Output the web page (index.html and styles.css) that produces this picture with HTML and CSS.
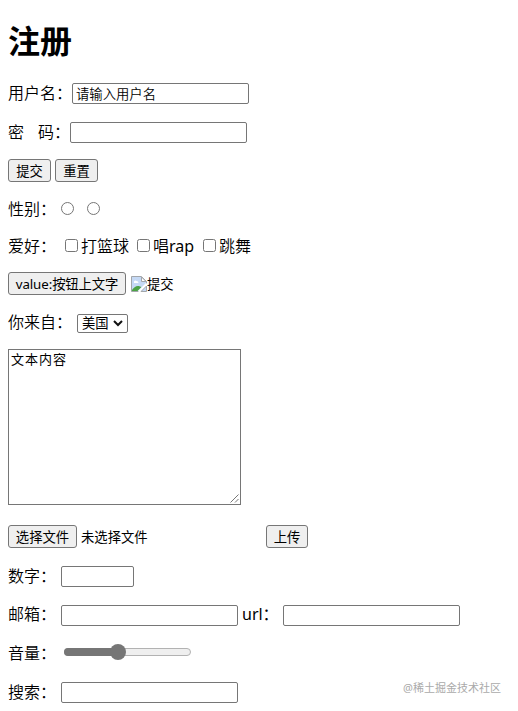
FILE: index.html
```html
<!DOCTYPE html>
<html lang="zh-CN">
<head>
<meta charset="UTF-8">
<title>注册</title>
<link rel="stylesheet" href="styles.css">
</head>
<body>
<h1>注册</h1>
<form>
  <div class="row user"><label class="w64">用户名：</label><input class="field" type="text" value="请输入用户名"></div>
  <div class="row pass"><label class="w62"><span class="mi">密</span>码：</label><input class="field" type="password"></div>
  <div class="row actions"><button class="btn w43" type="button">提交</button><button class="btn w43" type="button">重置</button></div>
  <div class="row gender"><label class="w53">性别：</label><input class="radio" type="radio"><input class="radio" type="radio"></div>
  <div class="row hobby"><label class="w57">爱好：</label><input class="check" type="checkbox"><span class="opt ball">打篮球</span><input class="check" type="checkbox"><span class="opt rap">唱<span class="latin">rap</span></span><input class="check" type="checkbox"><span class="opt">跳舞</span></div>
  <div class="row image"><button class="btn w118" type="button">value:按钮上文字</button>
    <svg class="broken" width="16" height="16" viewBox="0 0 16 16">
      <path d="M.5.5h10l5 5v2l-8 8h-7z" fill="#c5d9f5" stroke="#a2a6aa"/>
      <path d="M10.500 1v4.500h4.500z" fill="#fff" stroke="#a2a6aa"/>
      <path d="M3 6.500a1.500 1.500 0 0 1 2.500-1.500a2 2 0 0 1 2 2H3z" fill="#fff"/>
      <path d="M1 15v-1c2-3 5-5 8-3.500l1.500.5-4 4z" fill="#4ca345"/>
      <path d="M10 15.500h5.500v-5.500z" fill="#c5d9f5" stroke="#a2a6aa"/>
      <path d="M7.500 15.500l8-8" stroke="#fff" stroke-width="1.500"/>
    </svg><span class="alt">提交</span></div>
  <div class="row from"><label class="w69">你来自：</label><span class="select">美国<svg width="10" height="7" viewBox="0 0 10 7"><path d="M1 1l4 4 4-4" fill="none" stroke="#111" stroke-width="2"/></svg></span></div>
  <div class="row content"><div class="area">文本内容<svg class="grip" width="9" height="9" viewBox="0 0 9 9"><path d="M.5 8.500l8-8M5 8.500l3.500-3.500" fill="none" stroke="#777"/></svg></div></div>
  <div class="row file"><button class="btn w69" type="button">选择文件</button><span class="filename">未选择文件</span><button class="btn w42" type="button">上传</button></div>
  <div class="row number"><label class="w53">数字：</label><input class="field short" type="text"></div>
  <div class="row email"><label class="w53">邮箱：</label><input class="field" type="email"><label class="url latin">url：</label><input class="field" type="url"></div>
  <div class="row volume"><label class="w56">音量：</label><div class="track"><span class="fill"></span><span class="thumb"></span></div></div>
  <div class="row search"><label class="w53">搜索：</label><input class="field" type="text"></div>
</form>
<div class="watermark">@稀土掘金技术社区</div>
</body>
</html>
```
FILE: styles.css
```css
* { box-sizing: border-box; }
body {
  margin: 0;
  padding: 0 8px;
  height: 711px;
  overflow: hidden;
  position: relative;
  background: #fff;
  color: #000;
  font: 16px/21px "Noto Sans", "Noto Sans CJK SC", sans-serif;
}
h1 { margin: 0; padding-top: 20px; height: 83px; font-size: 32px; line-height: 42px; }
form { display: flex; flex-direction: column; }
.row { display: flex; align-items: center; height: 21px; white-space: nowrap; }
label { flex: none; }
label, .opt { font-weight: 350; }
.latin { font-weight: 400; }
.w53 { width: 53px; }
.w56 { width: 56px; }
.w57 { width: 57px; }
.w62 { width: 62px; }
.w64 { width: 64px; }
.w69 { width: 69px; }
.mi { margin-right: 14px; }
.pass { margin-top: 18px; }
.actions { margin-top: 16px; height: 23px; gap: 4px; }
.gender { margin-top: 16px; }
.gender label, .hobby label, .hobby .opt { padding-top: 2px; }
.hobby { margin-top: 16px; }
.image { margin-top: 16px; height: 23px; }
.from { margin-top: 18px; }
.from label { padding-bottom: 2px; }
.content { margin-top: 15px; height: 156px; }
.file { margin-top: 20px; height: 23px; }
.number { margin-top: 18px; }
.email { margin-top: 18px; }
.email label { padding-bottom: 2px; }
.url { width: 41px; margin-left: 4px; }
.volume { margin-top: 15px; }
.volume label { padding-top: 4px; }
.search { margin-top: 20px; }
.field {
  flex: none;
  width: 177px;
  height: 21px;
  margin: 0;
  padding: 1px 3px;
  border: 1px solid #767676;
  border-radius: 2px;
  background: #fff;
  color: #000;
  font: 350 13.333px/17px "Noto Sans", "Noto Sans CJK SC", sans-serif;
}
.short { width: 73px; }
.btn {
  flex: none;
  height: 23px;
  margin: 0;
  padding: 1px 0 0;
  border: 1px solid #767676;
  border-radius: 3px;
  background: #efefef;
  color: #000;
  font: 13.333px/19px "Noto Sans", "Noto Sans CJK SC", sans-serif;
}
.w43 { width: 43px; }
.w118 { width: 118px; letter-spacing: -0.1px; }
.w42 { width: 42px; }
.radio, .check {
  appearance: none;
  flex: none;
  width: 13px;
  height: 13px;
  margin: 0;
  border: 1px solid #767676;
  background: #fff;
}
.radio { border-radius: 50%; }
.radio + .radio { margin-left: 13px; }
.check { border-radius: 2.5px; }
.opt { margin-left: 3px; }
.ball { width: 56px; }
.rap { width: 50px; }
.broken { margin-left: 5px; }
.alt, .filename { padding-top: 1px; font-size: 13.333px; }
.filename { width: 185px; margin-left: 4px; }
.select {
  display: flex;
  align-items: center;
  justify-content: space-between;
  width: 51px;
  height: 19px;
  padding: 0 4px;
  border: 1px solid #767676;
  border-radius: 2px;
  font-size: 13.333px;
}
.area {
  position: relative;
  width: 233px;
  height: 156px;
  padding: 0 2px;
  border: 1px solid #767676;
  font: 13px/18px "Noto Sans CJK SC", sans-serif;
  letter-spacing: 1px;
}
.grip { position: absolute; right: 1px; bottom: 1px; }
.track {
  position: relative;
  width: 127px;
  height: 8px;
  border: 1px solid #b2b2b2;
  border-radius: 4px;
  background: #efefef;
}
.fill { position: absolute; left: -1px; top: -1px; width: 54px; height: 8px; border-radius: 4px; background: #767676; }
.thumb { position: absolute; left: 45px; top: -5px; width: 16px; height: 16px; border-radius: 50%; background: #767676; }
.watermark { position: absolute; right: 17px; bottom: 13px; color: #aaa; font-size: 11px; line-height: 20px; }
```
